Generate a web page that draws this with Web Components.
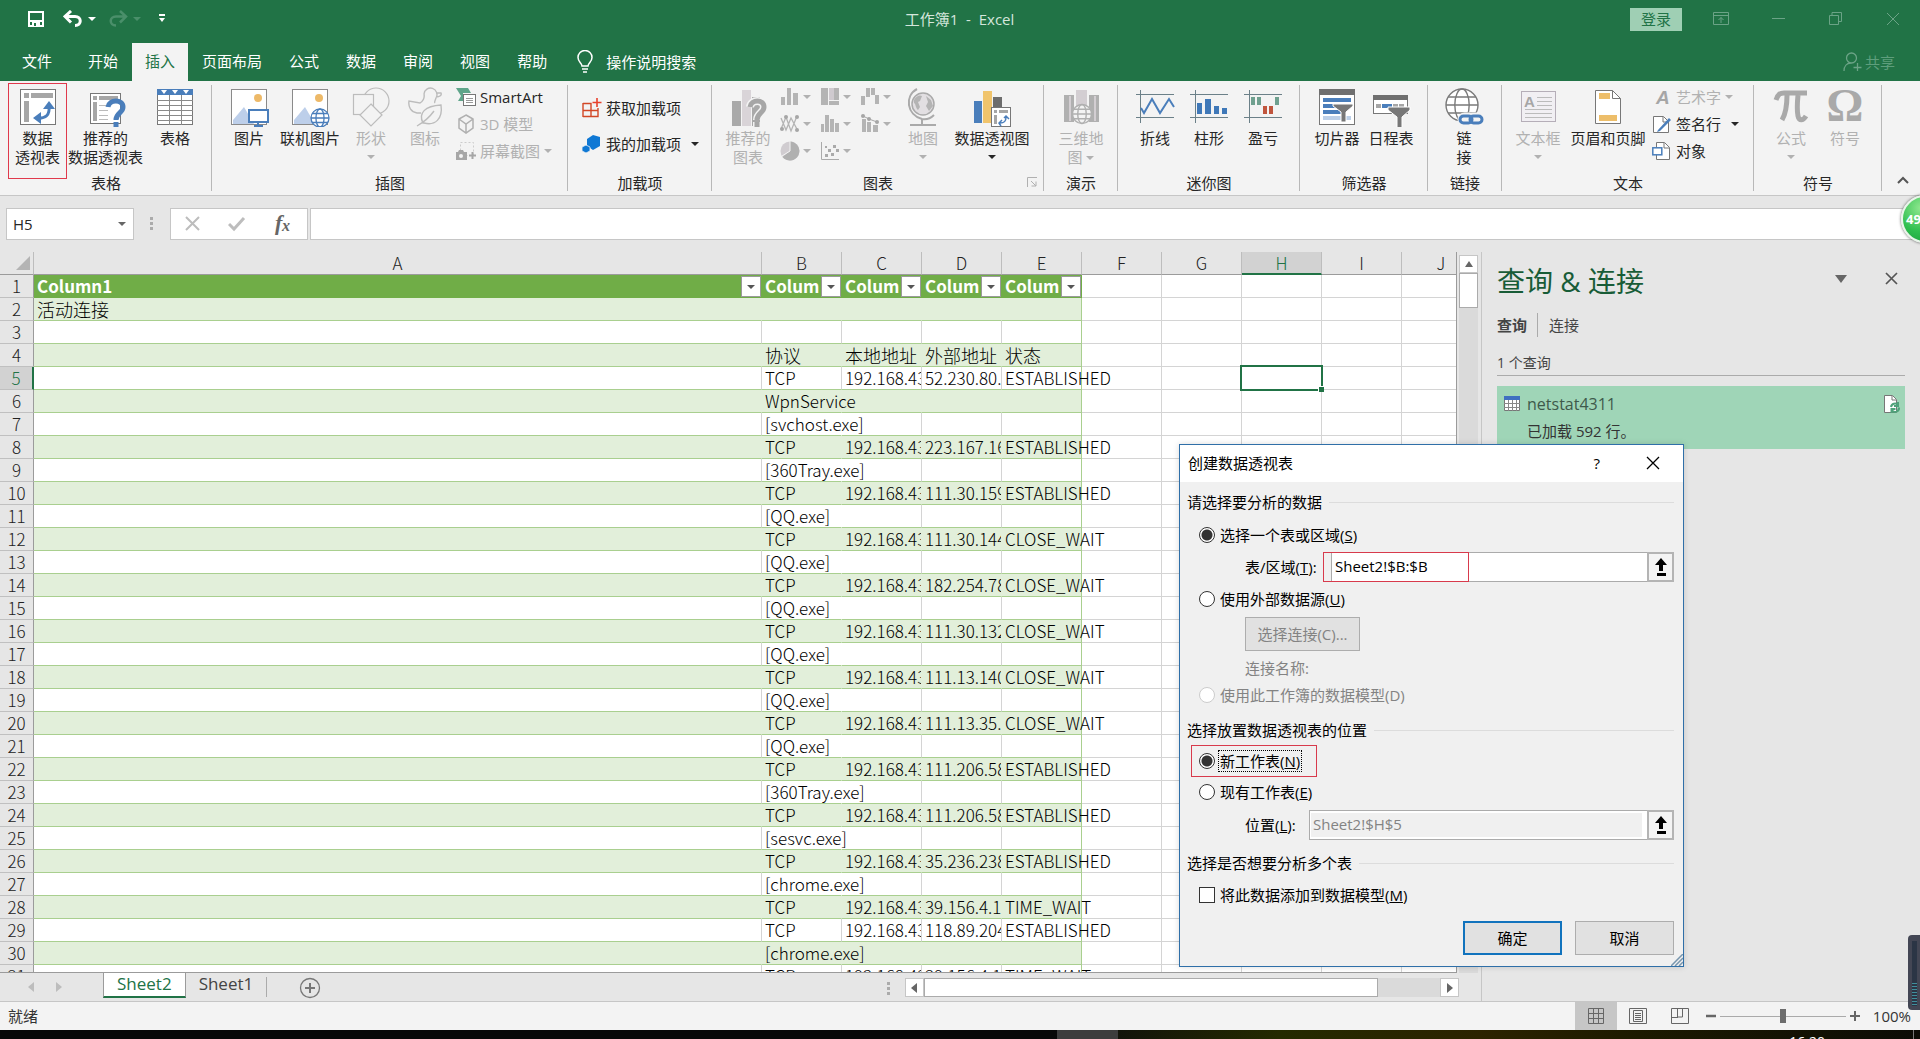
<!DOCTYPE html>
<html lang="zh-CN">
<head>
<meta charset="utf-8">
<title>工作簿1 - Excel</title>
<style>
html,body{margin:0;height:100%;overflow:hidden}
body{font:15px/20px "Open Sans","Noto Sans CJK SC",sans-serif;color:#262626;background:#e6e6e6}
xl-app{height:100%}
</style>
</head>
<body>
<xl-app></xl-app>
<script>
const BASE = `:host,*{box-sizing:border-box}
button,input{font:inherit;color:inherit;margin:0}
button{background:none;border:0;padding:0;border-radius:0}
button:not(:disabled){cursor:pointer}`;

function define(name, html, setup) {
  const tpl = document.createElement('template');
  customElements.define(name, class extends HTMLElement {
    connectedCallback() {
      if (this.shadowRoot) return;
      const root = this.attachShadow({ mode: 'open' });
      tpl.innerHTML = typeof html === 'function' ? html(this) : html;
      root.appendChild(tpl.content.cloneNode(true));
      if (setup) setup(this, root);
    }
  });
}

/* ---------- icons: [width, height, markup] ---------- */
const page = (x, y, w, h, s = '#777') => `<rect x="${x}.5" y="${y}.5" width="${w}" height="${h}" fill="#fff" stroke="${s}"/>`;
const photo = page(2, 2, 35, 35, '#8a8a8a') +
  `<circle cx="29" cy="11" r="4" fill="#edb968"/><path d="M4 37V33L15 20l10 17z" fill="#bdcfea"/>`;
const globe = (cx, cy, r, c, w, f = '#fff') => `<g fill="${f}" stroke="${c}" stroke-width="${w}"><circle cx="${cx}" cy="${cy}" r="${r}"/><ellipse cx="${cx}" cy="${cy}" rx="${r * .45}" ry="${r}" fill="none"/><path fill="none" d="M${cx - r} ${cy}h${2 * r}M${cx - r * .87} ${cy - r * .5}h${r * 1.74}M${cx - r * .87} ${cy + r * .5}h${r * 1.74}"/></g>`;
const bars = (c, list) => `<g fill="${c}">` + list.map(b => `<rect x="${b[0]}" y="${b[1]}" width="${b[2]}" height="${b[3]}"/>`).join('') + '</g>';
const funnel = (x, y) => `<path d="M${x} ${y}h22v3l-8 7v11h-5v-11l-9-7z" fill="#777" stroke="#fff" stroke-width="1"/>`;
const ICONS = {
  save: [18, 18, `<path d="M2 2h14v14H2z" fill="none" stroke="#fff" stroke-width="2"/><path d="M2 10h14v2H2zM5 12h8v5H5z" fill="#fff"/><path d="M7 13h2v3H7z" fill="#217346"/>`],
  undo: [20, 18, `<path d="M8 1L2 6.500l6 6M3 6.500h9c7 0 7 9 0 9" fill="none" stroke="#fff" stroke-width="3"/>`],
  redo: [20, 18, `<path d="M12 1l6 5.500-6 6M17 6.500H8c-7 0-7 9 0 9" fill="none" stroke="#4a8f6a" stroke-width="2.500"/>`],
  custom: [8, 10, `<path d="M1 0h6v2H1zM1 4h6L4 8z" fill="#fff"/>`],
  bulb: [16, 24, `<path d="M5 16c0-3-4-4-4-8.500a7 7 0 0 1 14 0C15 12 11 13 11 16zM5 19h6M6 22h4" fill="none" stroke="#fff" stroke-width="1.500"/>`],
  display: [16, 14, `<path d="M.5.5h15v12H.5zM.5 3.500h15M8 11V5.500M5.500 8L8 5.500 10.500 8" fill="none" stroke="#6ba386"/>`],
  min: [14, 14, `<path d="M0 6.500h13" stroke="#6ba386"/>`],
  restore: [14, 14, `<path d="M.5 3.500h9v9h-9zM3 3.500v-3h9.500v9H10" fill="none" stroke="#6ba386"/>`],
  close: [14, 14, `<path d="M1 1l12 12M13 1L1 13" stroke="#6ba386"/>`],
  share: [20, 20, `<path d="M1 19c0-5 3-8 7-8M3.500 6a5 5 0 1 0 10 0a5 5 0 1 0-10 0M14.500 11v8M10.500 15.500h8" fill="none" stroke="#6ba386" stroke-width="1.300"/>`],
  pivot: [40, 40, page(2, 2, 35, 35) + bars('#a6a6a6', [[6, 6, 5, 5], [13, 6, 22, 5], [6, 14, 5, 21]]) + `<path d="M18 31c10 1 14-3 13-12" fill="none" stroke="#4a7ebb" stroke-width="3"/><path d="M23 25v12l-8-6zM25 22h12l-6-8z" fill="#4a7ebb"/>`],
  recpivot: [40, 40, page(4, 6, 30, 30) + bars('#a6a6a6', [[7, 9, 4, 4], [13, 9, 19, 4], [7, 15, 4, 19]]) + `<path d="M13 18.500h9M13 23.500h9M13 28.500h9M13 32.500h9" stroke="#bbb"/><path d="M22 20c1-8 15-8 15 0 0 6-7 6-7 13M30 35v5" fill="none" stroke="#4a7ebb" stroke-width="5"/>`],
  table: [40, 40, page(2, 2, 35, 35) + `<path d="M2 2h36v6H2z" fill="#4a7ebb"/><path d="M6 3h6l-3 4zM17 3h6l-3 4zM28 3h6l-3 4z" fill="#fff"/><path d="M14.500 8v30M26.500 8v30M2 13.500h36M2 18.500h36M2 23.500h36M2 28.500h36M2 33.500h36" stroke="#8a8a8a"/>`],
  picture: [40, 40, photo + `<rect x="20" y="23" width="19" height="12" fill="#fff" stroke="#4a7ebb" stroke-width="2"/><path d="M29 35v4M25 39h9" stroke="#4a7ebb" stroke-width="2"/>`],
  online: [40, 40, photo + globe(30, 31, 9, '#4a7ebb', 1.3)],
  shapes: [40, 40, `<g fill="#f3f3f3" stroke="#bcbcbc" stroke-width="1.200"><circle cx="25" cy="14" r="13"/><rect x="2.500" y="7.500" width="20" height="20"/><path d="M20 17l11 11-11 11L9 28z"/></g>`],
  icons: [40, 40, `<g fill="none" stroke="#bcbcbc" stroke-width="1.400"><path d="M19 7a6.500 6.500 0 1 1 12 4c-1 3-2 4-1 5M31 6h5c1 2-1 4-5 4M19 7c1 5-1 7-4 9L4 14c-1 6 2 11 8 12h4"/><path d="M18 36c-5-10 2-17 18-18 2 14-6 21-17 18zM12 39c7-4 12-8 17-15"/></g>`],
  smartart: [20, 20, `<path d="M0 1h12l3 5h-8v8H2l3-5z" fill="#5fa58a"/><rect x="7.500" y="7.500" width="12" height="11" fill="#fff" stroke="#777"/><path d="M10 11.500h7M10 13.500h7M10 15.500h7" stroke="#999"/>`],
  cube: [20, 20, `<path d="M10 1l7 4v9l-7 5-7-5V5zM3 5l7 5 7-5M10 10v9" fill="none" stroke="#b0b0b0" stroke-width="1.500"/>`],
  shot: [20, 20, `<rect x="4.500" y="1.500" width="13" height="13" fill="none" stroke="#ccc" stroke-dasharray="2 2"/><path d="M0 11h2l1-2h4l1 2h3v8H0z" fill="#a6a6a6"/><circle cx="5" cy="15" r="2" fill="#f3f3f3"/><path d="M16.500 11v7M13 14.500h7" stroke="#a6a6a6" stroke-width="2"/>`],
  addin: [20, 20, `<path d="M1 5.500h8v13H1M1 5v14M1 12.500h15M9 12v6.500h7V10M9 5v8" fill="none" stroke="#d24726" stroke-width="1.400"/><path d="M15 0v9M10.500 4.500h9" stroke="#e8412c" stroke-width="1.600"/>`],
  myaddin: [20, 20, `<path d="M11 1l7 2v9l-7 4-6-4V5z" fill="#0f78d4"/><path d="M4 11l4 2v4l-4 2-4-2v-4z" fill="#0f78d4" stroke="#f3f3f3" stroke-width=".8"/>`],
  recchart: [40, 40, bars('#a9a9a9', [[4, 14, 9, 25]]) + bars('#d9d4d8', [[14, 3, 9, 36]]) + bars('#a9a9a9', [[24, 10, 8, 29]]) + `<g fill="none"><path d="M22 20c1-8 14-8 14 0 0 6-7 6-7 13M29 35v5" stroke="#f3f3f3" stroke-width="8"/><path d="M22 20c1-8 14-8 14 0 0 6-7 6-7 13M29 35v5" stroke="#a6a6a6" stroke-width="5"/></g>`],
  c1: [20, 20, bars('#b4b4b4', [[1, 10, 4, 8], [7, 1, 4, 17], [13, 6, 5, 12]])],
  c2: [20, 20, bars('#b4b4b4', [[1, 1, 7, 17], [14, 1, 5, 12], [9, 14, 10, 4]]) + bars('#cfcacf', [[9, 1, 5, 12]])],
  c3: [20, 20, bars('#b4b4b4', [[1, 9, 4, 9], [6, 1, 4, 9], [11, 1, 4, 7], [15, 8, 4, 9]])],
  c4: [20, 20, `<path d="M1 15L6 3l5 14 6-15M1 4l5 12L11 4l7 13" fill="none" stroke="#b4b4b4" stroke-width="1.300"/><g fill="#a6a6a6"><circle cx="6" cy="3" r="2"/><circle cx="17" cy="3" r="2"/><circle cx="2" cy="15" r="2"/><circle cx="17" cy="16" r="2"/></g>`],
  c5: [20, 20, bars('#b4b4b4', [[1, 10, 3, 8], [5, 1, 4, 17], [10, 5, 4, 13], [15, 9, 4, 9]])],
  c6: [20, 20, bars('#b4b4b4', [[2, 5, 4, 13], [7, 8, 4, 10], [13, 11, 5, 7]]) + `<path d="M3 2l6 3 8 3" stroke="#a6a6a6" fill="none"/><g fill="#a6a6a6"><circle cx="3" cy="2" r="2"/><circle cx="9" cy="5" r="2"/><circle cx="17" cy="8" r="2"/></g>`],
  c7: [20, 20, `<circle cx="10" cy="10" r="9.500" fill="#d0ccd0"/><path d="M10 10V.5a9.500 9.500 0 1 1-7.500 15.500z" fill="#b0b0b0"/><path d="M10 0v10l-8 5" stroke="#f3f3f3" fill="none"/>`],
  c8: [20, 20, `<path d="M1.500 1v17.500H19" fill="none" stroke="#aaa"/><g fill="#aaa"><path d="M5 13h3v3H5zM8 8h3v3H8zM11 12h3v3h-3zM13 4h3v3h-3zM16 8h3v3h-3zM5 5h2v2H5z"/></g>`],
  map: [40, 40, `<circle cx="20" cy="17" r="11" fill="#e2dfe2" stroke="#aaa" stroke-width="1.500"/><path d="M11 13c3-5 6-5 8-4l-2 5-2 1 2 5-2 3c-3-3-2-6-4-7zM23 9l5 4 2 6-4 5-3-5 2-4z" fill="#b4b4b4"/><path d="M14 2C1 9 4 28 19 32c6 1 9-1 12-4M19 32v5M7 38h26" fill="none" stroke="#aaa" stroke-width="2"/>`],
  pivotchart: [40, 40, bars('#4a7ebb', [[2, 14, 8, 22]]) + bars('#f0c46c', [[11, 4, 9, 32]]) + bars('#6d6d6d', [[21, 10, 9, 12]]) + page(19, 20, 19, 19) + bars('#a6a6a6', [[22, 23, 3, 3], [27, 23, 9, 3], [22, 28, 3, 9]]) + `<path d="M28 36c5 0 6-2 6-6M30 33l-3 3 2 3M32 31l2-2 3 3" fill="none" stroke="#4a7ebb" stroke-width="1.500"/>`],
  map3d: [40, 40, bars('#b0b0b0', [[3, 8, 10, 27], [28, 8, 10, 27]]) + bars('#d3ced2', [[15, 3, 11, 18], [8, 9, 2, 25], [33, 9, 2, 25]]) + globe(21, 27, 9.5, '#b0b0b0', 1.4, '#f3f3f3')],
  spline: [40, 40, `<path d="M1 7.500h38M1 30.500h38M5.500 3v33" stroke="#6b8088"/><path d="M6 21l3 5 8-14 8 14 9-14 5 8" fill="none" stroke="#4a7ebb" stroke-width="2"/>`],
  scol: [40, 40, `<path d="M1 7.500h38M1 30.500h38M6.500 3v33" stroke="#6b8088"/>` + bars('#3f78b8', [[8, 16, 5, 11], [16, 12, 6, 15], [25, 19, 5, 8], [33, 21, 5, 6]])],
  swin: [40, 40, `<path d="M1 7.500h38M1 30.500h38M6.500 3v33" stroke="#6b8088"/>` + bars('#6fa08f', [[8, 10, 4, 8], [14, 10, 4, 8], [32, 10, 4, 8]]) + bars('#c0553d', [[20, 19, 4, 8], [26, 19, 4, 8]])],
  slicer: [40, 40, page(2, 2, 35, 35) + bars('#6f6f6f', [[2, 2, 36, 6]]) + bars('#4a7ebb', [[6, 11, 28, 4], [6, 17, 14, 4], [6, 23, 18, 4]]) + bars('#bdd0e8', [[6, 29, 28, 4]]) + `<path d="M16 17h20v2l-7 6v10h-5v-10l-8-6z" fill="#777" stroke="#fff"/>`],
  timeline: [40, 40, page(2, 8, 34, 18) + bars('#6f6f6f', [[2, 8, 35, 5]]) + bars('#4a7ebb', [[11, 17, 10, 4]]) + bars('#a6a6a6', [[5, 17, 5, 4], [22, 17, 5, 4], [28, 17, 5, 4]]) + funnel(17, 20)],
  link: [40, 40, globe(18, 18, 16, '#7a7a7a', 1.4) + `<g fill="none" stroke="#f3f3f3" stroke-width="7"><rect x="17" y="29" width="12" height="7" rx="3.500"/><rect x="25" y="29" width="12" height="7" rx="3.500"/></g><g fill="none" stroke="#4a7ebb" stroke-width="3"><rect x="16" y="29" width="12" height="7" rx="3.500"/><rect x="26" y="29" width="12" height="7" rx="3.500"/></g>`],
  textbox: [40, 40, `<rect x="3.500" y="4.500" width="34" height="30" fill="#f1eff3" stroke="#b5aeb8"/><text x="6" y="20" font-family="Liberation Sans" font-weight="700" font-size="15" fill="#a6a6a6">A</text><path d="M19 10.500h15M19 14.500h15M19 18.500h15M7 22.500h27M7 26.500h27M7 30.500h27" stroke="#bbb"/>`],
  hf: [40, 40, `<path d="M7.500 3.500h17l8 8v25h-25z" fill="#fff" stroke="#777"/><path d="M24.500 3.500v8h8" fill="none" stroke="#777"/>` + bars('#edbe6a', [[11, 6, 11, 6], [11, 28, 18, 6]])],
  wordart: [20, 20, `<text x="4" y="17" font-family="Liberation Sans" font-weight="700" font-style="italic" font-size="19" fill="#a6a6a6">A</text>`],
  sign: [20, 20, `<path d="M1.500 2.500h10l5 5v11h-15z" fill="#fff" stroke="#777"/><path d="M11 3v5h5" fill="none" stroke="#777"/><path d="M6 16L17 4l2 2L8 17l-3 1z" fill="#4a7ebb"/>`],
  object: [20, 20, `<path d="M4.500 1.500h8l5 5v12h-13z" fill="#fff" stroke="#777"/><path d="M12 2v5h5" fill="none" stroke="#777"/><rect x=".8" y="6.800" width="9" height="7" fill="#fff" stroke="#4a7ebb" stroke-width="1.500"/>`],
  pi: [40, 40, `<g fill="none" stroke="#a9a9a9"><path d="M5 13c2-6 4-7 8-7h23" stroke-width="5"/><path d="M16 8c0 12-2 20-5 25" stroke-width="5"/><path d="M27 8c-1 10-1 16 0 21 1 5 5 5 8 0" stroke-width="5"/></g>`],
  omega: [40, 40, `<text x="20" y="34" text-anchor="middle" font-family="Liberation Serif" font-weight="700" font-size="46" fill="#a9a9a9">Ω</text>`],
  launch: [12, 12, `<path d="M1.500 11V1.500H11M5 5l5 5M10 5.500V10H5.500" fill="none" stroke="#b0b0b0"/>`],
  up: [12, 8, `<path d="M1 7l5-5 5 5" fill="none" stroke="#555" stroke-width="2"/>`],
  cancel: [18, 16, `<path d="M2 1l13 13M15 1L2 14" stroke="#bdbdbd" stroke-width="2"/>`],
  check: [18, 16, `<path d="M1 8l5 5L16 2" fill="none" stroke="#bdbdbd" stroke-width="3"/>`],
  fx: [22, 24, `<text x="3" y="18" font-family="Liberation Serif" font-weight="700" font-style="italic" font-size="22" fill="#666">f</text><text x="10" y="19" font-family="Liberation Serif" font-weight="700" font-style="italic" font-size="16" fill="#666">x</text>`],
  dots: [4, 14, `<path d="M0 0h3v3H0zM0 5h3v3H0zM0 10h3v3H0z" fill="#ababab"/>`],
  corner: [14, 14, `<path d="M14 0v14H0z" fill="#b4b4b4"/>`],
  panemenu: [12, 8, `<path d="M0 0h12L6 8z" fill="#666"/>`],
  panex: [14, 14, `<path d="M1 1l11 11M12 1L1 12" stroke="#555" stroke-width="1.700"/>`],
  smalltable: [16, 16, `<path d="M.5.5h15v14H.5z" fill="#fff" stroke="#777"/><path d="M0 0h16v4H0z" fill="#3f6fc0"/><path d="M4.500 4v11M8.500 4v11M12.500 4v11M0 7.500h16M0 11.500h16" stroke="#888"/>`],
  loaded: [18, 20, `<path d="M1.500 1.500h8l4 4v13h-12z" fill="#fff" stroke="#777"/><path d="M9 2v4h4" fill="none" stroke="#777"/><path d="M8 13a4 4 0 0 1 7-2M16 13.500a4 4 0 0 1-7 3M15 8v4h-4M8.500 19v-4h4" fill="none" stroke="#4fa27a" stroke-width="2"/>`],
  left: [8, 12, `<path d="M7 1v10L1 6z"/>`],
  right: [8, 12, `<path d="M1 1v10l6-5z"/>`],
  scrollup: [10, 8, `<path d="M1 7h8L5 1z"/>`],
  add: [22, 22, `<circle cx="11" cy="11" r="9.500" fill="none" stroke="#777" stroke-width="1.300"/><path d="M11 6v10M6 11h10" stroke="#777" stroke-width="2"/>`],
  vnormal: [18, 18, `<path d="M1.500 1.500h15v15h-15zM6.500 1v15M11.500 1v15M1 6.500h16M1 11.500h16" fill="none" stroke="#666"/>`],
  vlayout: [18, 18, `<path d="M.5 1.500h17v15H.5zM4.500 3.500h9v11h-9zM6 6.500h6M6 8.500h6M6 10.500h6M6 12.500h6" fill="none" stroke="#666"/>`],
  vbreak: [18, 18, `<path d="M.5 1.500h17v15H.5zM6.500 1v9h5V1M1 10.500h6" fill="none" stroke="#666"/>`],
  minus: [12, 12, `<path d="M1 6h10" stroke="#666" stroke-width="2.500"/>`],
  plus: [12, 12, `<path d="M1 6h10M6 1v10" stroke="#666" stroke-width="2"/>`],
  dx: [14, 14, `<path d="M1 1l12 12M13 1L1 13" stroke="#000" stroke-width="1.300"/>`],
  collapse: [20, 20, `<path d="M10 1l6 7h-4v6H8V8H4zM6 16h9v3H6z" fill="#000"/>`],
  grip: [12, 12, `<path d="M0 12L12 0M4 12l8-8M8 12l4-4" stroke="#7795ad" stroke-width="1.500"/>`]
};
define('xl-icon', el => {
  const [w, h, m] = ICONS[el.getAttribute('name')];
  return `<style>:host{display:inline-flex;flex:none}svg{display:block}</style><svg width="${w}" height="${h}" viewBox="0 0 ${w} ${h}" aria-hidden="true">${m}</svg>`;
});
define('xl-caret', `<style>:host{display:inline-block;flex:none;border:4px solid transparent;border-top-color:currentColor;border-bottom-width:0}</style>`);

/* ---------- ribbon parts ---------- */
define('xl-big', el => `<style>${BASE}
:host{display:block;flex:none}
:host([off]){color:#b1b1b1}
button{display:flex;flex-direction:column;align-items:center;width:100%;height:96px;padding-top:4px;text-align:center;white-space:nowrap;line-height:19px}
:host([marked]) button{border:1px solid #e0394c;padding-top:3px}
xl-icon{margin-bottom:2px}
xl-caret{margin-top:7px}
</style><button ${el.hasAttribute('off') ? 'disabled' : ''}><xl-icon name="${el.getAttribute('icon')}"></xl-icon><span><slot></slot></span>${el.hasAttribute('menu') ? '<xl-caret></xl-caret>' : ''}</button>`);

define('xl-small', el => `<style>${BASE}
:host{display:block}
:host([off]){color:#b1b1b1}
button{display:flex;align-items:center;gap:4px;height:27px;white-space:nowrap}
xl-caret{margin-left:0}
:host([wide]) xl-caret{margin-left:6px}
</style><button ${el.hasAttribute('off') ? 'disabled' : ''}><xl-icon name="${el.getAttribute('icon')}"></xl-icon><slot></slot>${el.hasAttribute('menu') ? '<xl-caret></xl-caret>' : ''}</button>`);

define('xl-group', el => `<style>${BASE}
:host{display:flex;flex-direction:column;flex:none;position:relative}
:host::after{content:"";position:absolute;right:0;top:4px;bottom:4px;border-right:1px solid #b8b8b8}
.tools{display:flex;height:97px;padding:2px 0 0 var(--lead)}
.label{text-align:center;line-height:11px}
.launch{position:absolute;right:6px;bottom:3px}
</style><div class="tools"><slot></slot></div><div class="label">${el.getAttribute('label')}</div>${el.hasAttribute('launcher') ? '<button class="launch" aria-label="更多"><xl-icon name="launch"></xl-icon></button>' : ''}`);

define('xl-title-bar', `<style>${BASE}
:host{display:flex;align-items:center;height:38px;color:#fff;padding:0 20px}
.side{flex:1;display:flex;align-items:center}
.start{padding-left:7px}
.side button{display:flex}
.end{justify-content:flex-end}
.title{color:#d5e6dc;white-space:pre;padding-right:8px}
.login{background:#9fcfb4;color:#217346;height:23px;width:52px;justify-content:center;line-height:22px;margin-right:31px}
.end button:not(.login){margin-left:43px}
.end .login+button:not(.login){margin-left:0}
</style>
<div class="side start"><button aria-label="保存"><xl-icon name="save"></xl-icon></button>
<button aria-label="撤销" style="margin-left:18px"><xl-icon name="undo"></xl-icon></button><xl-caret style="margin-left:5px"></xl-caret>
<button aria-label="恢复" style="margin-left:12px"><xl-icon name="redo"></xl-icon></button><xl-caret style="margin-left:5px;color:#4a8f6a"></xl-caret>
<button aria-label="自定义" style="margin-left:17px"><xl-icon name="custom"></xl-icon></button></div>
<span class="title">工作簿1  -  Excel</span>
<div class="side end"><button class="login">登录</button><button aria-label="功能区显示选项"><xl-icon name="display"></xl-icon></button><button aria-label="最小化"><xl-icon name="min"></xl-icon></button><button aria-label="还原"><xl-icon name="restore"></xl-icon></button><button aria-label="关闭"><xl-icon name="close"></xl-icon></button></div>`);

define('xl-tabs', () => `<style>${BASE}
:host{display:flex;height:43px;padding-top:5px;color:#fff}
nav{display:flex;gap:1px}
nav button{padding:0 13px 3px;white-space:nowrap}
nav button:first-child{padding:0 22px 3px}
nav .on{background:#f3f3f3;color:#217346}
.ask,.share{display:flex;align-items:center;gap:13px;margin-left:17px}
.share{margin:0 25px 0 auto;color:#5e9e7c;gap:2px}
</style><nav>${['文件', '开始', '插入', '页面布局', '公式', '数据', '审阅', '视图', '帮助'].map(t => `<button${t === '插入' ? ' class="on"' : ''}>${t}</button>`).join('')}</nav>
<button class="ask"><xl-icon name="bulb"></xl-icon>操作说明搜索</button>
<button class="share"><xl-icon name="share"></xl-icon>共享</button>`);

define('xl-ribbon', `<style>${BASE}
:host{display:flex;height:115px;background:#f3f3f3;border-bottom:1px solid #c6c6c6}
.col{display:flex;flex-direction:column;margin-left:4px}
.add{margin-left:0;padding-top:11px;gap:9px}
.charts{display:grid;grid-template-columns:repeat(3,40px);grid-auto-rows:27px;margin-left:5px}
.charts button{display:flex;align-items:center;gap:3px;color:#b1b1b1}
.fold{margin:auto 11px 7px auto}
.w54{width:54px}.w60{width:60px}
</style>
<xl-group label="表格" style="width:212px;--lead:8px"><xl-big marked icon="pivot" style="width:59px">数据<br>透视表</xl-big><xl-big icon="recpivot" style="width:77px">推荐的<br>数据透视表</xl-big><xl-big icon="table" style="width:62px">表格</xl-big></xl-group>
<xl-group label="插图" style="width:356px;--lead:10px"><xl-big class="w54" icon="picture">图片</xl-big><xl-big icon="online" style="width:68px">联机图片</xl-big><xl-big off menu class="w54" icon="shapes">形状</xl-big><xl-big off class="w54" icon="icons">图标</xl-big>
<div class="col"><xl-small icon="smartart">SmartArt</xl-small><xl-small off icon="cube">3D 模型</xl-small><xl-small off menu icon="shot">屏幕截图</xl-small></div></xl-group>
<xl-group label="加载项" style="width:144px;--lead:14px"><div class="col add"><xl-small icon="addin">获取加载项</xl-small><xl-small menu wide icon="myaddin">我的加载项</xl-small></div></xl-group>
<xl-group label="图表" launcher style="width:332px;--lead:9px"><xl-big off class="w54" icon="recchart">推荐的<br>图表</xl-big>
<div class="charts">${[1, 2, 3, 4, 5, 6, 7, 8].map(i => `<button disabled aria-label="图表类型 ${i}"><xl-icon name="c${i}"></xl-icon><xl-caret></xl-caret></button>`).join('')}</div>
<xl-big off menu icon="map" style="width:46px">地图</xl-big><xl-big menu icon="pivotchart" style="width:92px">数据透视图</xl-big></xl-group>
<xl-group label="演示" style="width:74px;--lead:7px"><xl-big off class="w60" icon="map3d">三维地<br>图 <xl-caret style="vertical-align:3px"></xl-caret></xl-big></xl-group>
<xl-group label="迷你图" style="width:182px;--lead:10px"><xl-big class="w54" icon="spline">折线</xl-big><xl-big class="w54" icon="scol">柱形</xl-big><xl-big class="w54" icon="swin">盈亏</xl-big></xl-group>
<xl-group label="筛选器" style="width:128px;--lead:10px"><xl-big class="w54" icon="slicer">切片器</xl-big><xl-big class="w54" icon="timeline">日程表</xl-big></xl-group>
<xl-group label="链接" style="width:74px;--lead:9px"><xl-big class="w54" icon="link">链<br>接</xl-big></xl-group>
<xl-group label="文本" style="width:252px;--lead:6px"><xl-big off menu class="w60" icon="textbox">文本框</xl-big><xl-big icon="hf" style="width:80px">页眉和页脚</xl-big>
<div class="col"><xl-small off menu icon="wordart">艺术字</xl-small><xl-small menu wide icon="sign">签名行</xl-small><xl-small icon="object">对象</xl-small></div></xl-group>
<xl-group label="符号" style="width:128px;--lead:10px"><xl-big off menu class="w54" icon="pi">公式</xl-big><xl-big off class="w54" icon="omega">符号</xl-big></xl-group>
<button class="fold" aria-label="折叠功能区"><xl-icon name="up"></xl-icon></button>`);

define('xl-formula-bar', `<style>${BASE}
:host{display:flex;height:56px;padding:12px 0 12px 6px}
.name{display:flex;align-items:center;width:128px;background:#fff;border:1px solid #c6c6c6;padding-right:7px}
.name input{flex:1;min-width:0;border:0;background:none;padding:0 0 0 6px}
.name button{display:flex;color:#666}
.dots{display:flex;align-items:center;width:36px;justify-content:center}
.acts{display:flex;align-items:center;width:138px;background:#fff;border:1px solid #c6c6c6;padding:0 13px;justify-content:space-between}
.acts button{display:flex}
.f{flex:1;border:1px solid #c6c6c6;border-right:0;background:#fff;margin-left:2px;padding:0 6px}
</style><div class="name"><input aria-label="名称框" value="H5"><button aria-label="名称列表"><xl-caret></xl-caret></button></div>
<div class="dots"><xl-icon name="dots"></xl-icon></div>
<div class="acts"><button aria-label="取消" disabled><xl-icon name="cancel"></xl-icon></button><button aria-label="输入" disabled><xl-icon name="check"></xl-icon></button><button aria-label="插入函数"><xl-icon name="fx"></xl-icon></button></div>
<input class="f" aria-label="编辑栏">`);

/* ---------- worksheet ---------- */
const T = (ip, st) => ['', 'TCP', '192.168.43', ip, st], P = n => ['', '[' + n + '.exe]', '', '', ''];
const EST = 'ESTABLISHED', CW = 'CLOSE_WAIT', TW = 'TIME_WAIT';
const ROWS = [
  ['活动连接', '', '', '', ''], ['', '', '', '', ''], ['', '协议', '本地地址', '外部地址', '状态'],
  T('52.230.80.', EST), ['', 'WpnService', '', '', ''], P('svchost'),
  T('223.167.16', EST), P('360Tray'), T('111.30.159', EST), P('QQ'), T('111.30.144', CW), P('QQ'),
  T('182.254.78', CW), P('QQ'), T('111.30.132', CW), P('QQ'), T('111.13.140', CW), P('QQ'),
  T('111.13.35.', CW), P('QQ'), T('111.206.58', EST), P('360Tray'), T('111.206.58', EST), P('sesvc'),
  T('35.236.238', EST), P('chrome'), T('39.156.4.1', TW), T('118.89.204', EST), P('chrome'), T('39.156.4.1', TW)
];
define('xl-grid', () => {
  const head = 'ABCDEFGHIJ'.split('').map(c => `<th scope="col"${c === 'H' ? ' class="sel"' : ''}>${c}</th>`).join('');
  const blank = n => [...'FGHIJ'].map(c => `<td>${n === 5 && c === 'H' ? '<div class="cursor"></div>' : ''}</td>`).join('');
  const hdr = [1, 2, 3, 4, 5].map(i => `<td class="h"><div class="hc"><span>${i === 1 ? 'Column1' : 'Colum'}</span><button aria-label="筛选 Column${i}"><xl-caret></xl-caret></button></div></td>`).join('');
  const body = ROWS.map((r, k) => {
    const n = k + 2;
    return `<tr class="${n % 2 ? '' : 'band'}"><th scope="row"${n === 5 ? ' class="sel"' : ''}>${n}</th>` +
      r.map((t, i) => `<td class="t${i === 4 ? ' edge' : ''}${i === 1 && t[0] === '[' ? ' spill' : ''}"><div class="${i === 2 || i === 3 ? 'clip' : ''}${/[\u4e00-\u9fff]/.test(t) ? ' zh' : ''}">${t}</div></td>`).join('') + blank(n) + '</tr>';
  }).join('');
  return `<style>${BASE}
:host{display:block;flex:1;min-height:0;overflow:hidden;border-right:1px solid #9b9b9b;border-bottom:1px solid #9b9b9b;background:#fff}
table{border-collapse:separate;border-spacing:0;table-layout:fixed;width:calc(100% + 25px);font:300 17px/22px "Noto Sans CJK SC",sans-serif;color:#000}
th{font-weight:300;padding:0;background:#e6e6e6;color:#222}
td{padding:0 3px;height:23px;border-right:1px solid #d4d4d4;border-bottom:1px solid #d4d4d4;white-space:nowrap}
thead th{height:23px;line-height:20px;border-right:1px solid #bdbdbd;border-bottom:1px solid #9b9b9b}
thead th:first-child{text-align:right;line-height:0;padding-right:3px}
tbody th{border-right:1px solid #9b9b9b;border-bottom:1px solid #c0c0c0}
thead .sel{background:#d2d2d2;color:#217346;border-bottom:2px solid #217346}
tbody .sel{background:#d2d2d2;color:#217346;border-right:2px solid #217346}
td>div{height:22px}
.clip{overflow:hidden;margin-right:-3px}
.zh{font-size:18px}
.t{border-bottom-color:#a9cf8f}
.band .t{background:#e2efda;border-right-color:#e2efda}
.t.edge,.band .t.edge{border-right-color:#a9cf8f}
.spill{border-right-color:transparent}
td.h{background:#70ad47;padding:0 0 0 3px;border-color:#70ad47;color:#fff;font-weight:700}
.hc{display:flex;justify-content:space-between}
.hc button{display:flex;align-items:center;justify-content:center;flex:none;width:20px;height:21px;background:#fff;border:1px solid #9a9a9a;color:#555;margin-top:1px}
.cursor{position:relative}
.cursor::before{content:"";position:absolute;inset:-2px -5px -2px -5px;border:2px solid #217346}
.cursor::after{content:"";position:absolute;right:-6px;bottom:-3px;width:5px;height:5px;background:#217346;border:1px solid #fff;border-width:1px 0 0 1px}
</style><table><colgroup><col style="width:34px"><col style="width:728px">${'<col style="width:80px">'.repeat(8)}<col></colgroup>
<thead><tr><th><xl-icon name="corner"></xl-icon></th>${head}</tr></thead>
<tbody><tr><th scope="row">1</th>${hdr}${blank(1)}</tr>${body}</tbody></table>`;
});

define('xl-sheet', `<style>${BASE}
:host{display:flex;flex-direction:column;flex:1;min-width:0;border-right:1px solid #c6c6c6}
.top{display:flex;flex:1;min-height:0}
.vs{width:24px;padding:3px 3px 0 2px;display:flex;flex-direction:column}
.vs button,.hs button{display:flex;align-items:center;justify-content:center;background:#fff;border:1px solid #c6c6c6;fill:#666}
.vs button{height:18px}
.vthumb{height:35px;background:#fff;border:1px solid #ababab}
.vs .track{flex:1;background:#dadada}
.bottom{display:flex;height:29px;border-bottom:1px solid #c6c6c6;padding-right:22px;font-size:17px;line-height:22px}
.nav{display:flex;gap:20px;padding:8px 0 0 27px;width:103px;fill:#bdbdbd}
.nav button{display:flex}
.tab{height:25px;padding:0 13px 3px;line-height:22px;color:#444}
.tab.on{background:#fff;color:#217346;border:1px solid #9b9b9b;border-top:0;border-bottom:2px solid #217346;padding-bottom:1px}
.sep{border-right:1px solid #ababab;height:20px;margin-top:4px}
.plus{display:flex;margin:4px 0 0 32px;height:22px}
.dots{margin:9px 14px 0 auto}
.hs{display:flex;width:38%;height:19px;margin-top:5px}
.hs button{width:19px}
.hthumb{flex:88;background:#fff;border:1px solid #ababab}
.hs .track{flex:12;background:#dadada}
</style><div class="top"><xl-grid></xl-grid><div class="vs"><button aria-label="向上滚动"><xl-icon name="scrollup"></xl-icon></button><div class="vthumb"></div><div class="track"></div></div></div>
<div class="bottom"><div class="nav"><button aria-label="上一个"><xl-icon name="left"></xl-icon></button><button aria-label="下一个"><xl-icon name="right"></xl-icon></button></div>
<button class="tab on">Sheet2</button><button class="tab">Sheet1</button><span class="sep"></span><button class="plus" aria-label="新工作表"><xl-icon name="add"></xl-icon></button>
<xl-icon class="dots" name="dots"></xl-icon><div class="hs"><button aria-label="向左滚动"><xl-icon name="left"></xl-icon></button><div class="hthumb"></div><div class="track"></div><button aria-label="向右滚动"><xl-icon name="right"></xl-icon></button></div></div>`);

define('xl-query-pane', `<style>${BASE}
:host{display:block;flex:none;width:438px;padding:11px 15px 0;border-bottom:1px solid #c6c6c6;color:#444}
header{display:flex;align-items:center;height:36px}
h2{margin:0 auto 0 0;font-weight:400;font-size:28px;line-height:36px;color:#185c37}
header button{display:flex;margin:0 6px 4px 0}
header button+button{margin-left:32px}
nav{display:flex;margin-top:14px;height:24px}
nav button{padding-right:10px}
nav .on{font-weight:700}
nav button+button{border-left:1px solid #ababab;padding-left:11px}
.count{margin-top:15px;font-size:14px;height:24px;line-height:22px;border-bottom:1px solid #ababab}
.card{display:grid;grid-template-columns:16px 1fr auto;column-gap:7px;align-items:center;margin-top:10px;background:#9fd5b7;height:63px;padding:4px 4px 5px 7px;grid-auto-rows:27px;color:#3e5a4b}
.name{font-size:16px}
.note{grid-column:2;color:#333}
</style><header><h2>查询 &amp; 连接</h2><button aria-label="任务窗格选项"><xl-icon name="panemenu"></xl-icon></button><button aria-label="关闭"><xl-icon name="panex"></xl-icon></button></header>
<nav><button class="on">查询</button><button>连接</button></nav><div class="count">1 个查询</div>
<div class="card"><xl-icon name="smalltable"></xl-icon><span class="name">netstat4311</span><xl-icon name="loaded"></xl-icon><span class="note">已加载 592 行。</span></div>`);

define('xl-status-bar', `<style>${BASE}
:host{display:flex;align-items:center;height:28px;background:#f3f3f3;padding:0 9px 0 8px;color:#333}
.views{display:flex;margin-left:auto;height:28px}
.views button{display:flex;align-items:center;justify-content:center;width:42px}
.views .on{background:#c6c6c6}
.z{display:flex;margin-left:4px}
input{appearance:none;width:126px;height:14px;margin:0 3px;background:linear-gradient(#aaa,#aaa) center/100% 1px no-repeat}
input::-webkit-slider-thumb{appearance:none;width:6px;height:14px;background:#6d6d6d}
output{margin-left:12px}
</style><span>就绪</span><div class="views"><button class="on" aria-label="普通"><xl-icon name="vnormal"></xl-icon></button><button aria-label="页面布局"><xl-icon name="vlayout"></xl-icon></button><button aria-label="分页预览"><xl-icon name="vbreak"></xl-icon></button></div>
<button class="z" aria-label="缩小"><xl-icon name="minus"></xl-icon></button><input type="range" aria-label="缩放" min="0" max="100" value="50"><button class="z" style="margin-left:0" aria-label="放大"><xl-icon name="plus"></xl-icon></button><output>100%</output>`);

define('xl-taskbar', `<style>
:host{display:flex;height:9px;overflow:hidden;background:#080808;color:#fff}
.a{flex:1057}.b{flex:61;background:#3d3d3d}
.c{flex:802;background:linear-gradient(90deg,#12140a,#242a00 20%,#2c2300 45%,#1c1a00 65%,#0c0c06);display:flex;justify-content:flex-end}
.clock{padding-right:88px;line-height:20px;font-size:14px;margin-top:2px}
.desk{border-left:1px solid #777;width:6px}
</style><div class="a"></div><div class="b"></div><div class="c"><span class="clock">16:20</span><span class="desk"></span></div>`);

/* ---------- dialog ---------- */
define('xl-section', `<style>:host{display:flex;align-items:center;gap:7px;height:26px;line-height:18px}:host::after{content:"";flex:1;border-top:1px solid #dcdcdc}</style><slot></slot>`);
define('xl-dialog', `<style>${BASE}
:host{display:block;background:#f0f0f0;border:1px solid #2f6fa8;color:#000;width:505px;box-shadow:0 0 6px rgba(0,0,0,.15)}
header{display:flex;align-items:center;height:37px;background:#fff;padding:0 23px 2px 8px}
header span{margin-right:auto}
header button{display:flex;margin-left:46px}
form{padding:7px 9px 11px 7px}
.opt{display:flex;align-items:center;gap:5px;height:26px;padding-left:12px}
.opt label{white-space:nowrap}
.opt input{appearance:none;width:16px;height:16px;border:1px solid #333;border-radius:50%;background:#fff}
.opt input:checked{background:radial-gradient(circle,#333 0 5px,#fff 6px)}
.opt input[type=checkbox]{border-radius:0}
.opt input:disabled{border-color:#ccc}
.dim{color:#838383}
.row{display:flex;height:30px;padding-left:58px}
.row label{flex:none;width:78px;line-height:31px}
.row.loc label{width:64px}
.field{position:relative;display:flex;flex:1;border:1px solid #ababab;background:#fff}
.field input{flex:1;min-width:0;border:0;background:none;padding:0 4px 3px 3px}
.ref input{margin-left:7px;border-left:1px solid #ababab}
.ref{background:linear-gradient(90deg,#f0f0f0 8px,#fff 8px)}
.loc .field input{background:#f0f0f0;margin:2px 6px 2px 1px;padding-left:2px;color:#838383}
.field button{width:27px;display:flex;align-items:center;justify-content:center;border:2px solid #b4b4b4;background:#f4f4f4;margin:-1px}
.mark::after{content:"";position:absolute;left:-1px;top:-1px;bottom:-1px;width:144px;border:1px solid #d83a4c}
.new{border:1px solid #d83a4c;height:32px;width:126px;margin:1px 0 2px 4px;padding-left:7px;gap:3px}
.new label{border:1px dotted #000;padding:0 1px;line-height:20px}
.pick,.foot button{background:#e1e1e1;border:1px solid #adadad;height:34px}
.pick{display:block;margin:5px 0 4px 58px;width:115px;color:#838383}
.cn{padding-left:58px;line-height:26px}
.foot{display:flex;justify-content:flex-end;gap:13px;margin-top:13px}
.foot button{width:99px}
.foot .ok{border:2px solid #1173bd}
.grip{position:absolute;right:0;bottom:0}
</style>
<header><span id="t">创建数据透视表</span><button aria-label="帮助">?</button><button aria-label="关闭"><xl-icon name="dx"></xl-icon></button></header>
<form aria-labelledby="t" onsubmit="return false">
<xl-section>请选择要分析的数据</xl-section>
<div class="opt" style="margin:7px 0 4px"><input type="radio" name="src" id="s" checked><label for="s">选择一个表或区域(<u>S</u>)</label></div>
<div class="row"><label for="ref">表/区域(<u>T</u>):</label><div class="field ref mark"><input id="ref" value="Sheet2!$B:$B"><button type="button" aria-label="选取区域"><xl-icon name="collapse"></xl-icon></button></div></div>
<div class="opt" style="margin-top:4px"><input type="radio" name="src" id="x"><label for="x">使用外部数据源(<u>U</u>)</label></div>
<button type="button" class="pick" disabled>选择连接(C)...</button>
<div class="cn dim">连接名称:</div>
<div class="opt dim" style="margin:1px 0 9px"><input type="radio" name="src" id="m" disabled><label for="m">使用此工作簿的数据模型(D)</label></div>
<xl-section>选择放置数据透视表的位置</xl-section>
<div class="opt new" style="margin-top:2px"><input type="radio" name="dst" id="n" checked><label for="n">新工作表(<u>N</u>)</label></div>
<div class="opt"><input type="radio" name="dst" id="e"><label for="e">现有工作表(<u>E</u>)</label></div>
<div class="row loc" style="margin:5px 0 10px"><label for="loc">位置(<u>L</u>):</label><div class="field"><input id="loc" value="Sheet2!$H$5" disabled><button type="button" aria-label="选取位置"><xl-icon name="collapse"></xl-icon></button></div></div>
<xl-section>选择是否想要分析多个表</xl-section>
<div class="opt" style="margin-top:6px"><input type="checkbox" id="k"><label for="k">将此数据添加到数据模型(<u>M</u>)</label></div>
<div class="foot"><button class="ok">确定</button><button type="button">取消</button></div>
</form><xl-icon class="grip" name="grip"></xl-icon>`);

define('xl-app', `<style>
:host{display:flex;flex-direction:column;position:relative;overflow:hidden}
.green{background:#217346}
main{display:flex;flex:1;min-height:0}
xl-dialog{position:absolute;left:1179px;top:444px}
.ball{position:absolute;right:-29px;top:195px;width:48px;height:48px;box-sizing:border-box;border-radius:50%;border:2px solid #e9f5ea;background:radial-gradient(circle at 40% 25%,#8fe88f,#2fbf4f 55%,#179a3a);color:#fff;font-weight:700;font-size:13px;line-height:44px;padding-left:3px;box-shadow:0 0 3px #555}
.gadget{position:absolute;right:0;bottom:29px;width:12px;height:75px;border-radius:4px 0 0 4px;background:#434654}
.gadget::after{content:"";position:absolute;left:4px;top:6px;width:5px;bottom:4px;background:linear-gradient(#2b3545 65%,transparent 65%),repeating-linear-gradient(#3f8f9c 0 1px,#2b3545 1px 3px)}
</style><div class="green"><xl-title-bar></xl-title-bar><xl-tabs></xl-tabs></div>
<xl-ribbon></xl-ribbon><xl-formula-bar></xl-formula-bar>
<main><xl-sheet></xl-sheet><xl-query-pane></xl-query-pane></main>
<xl-status-bar></xl-status-bar><xl-taskbar></xl-taskbar>
<xl-dialog role="dialog"></xl-dialog><div class="ball">49</div><div class="gadget"></div>`);
</script>
</body>
</html>
